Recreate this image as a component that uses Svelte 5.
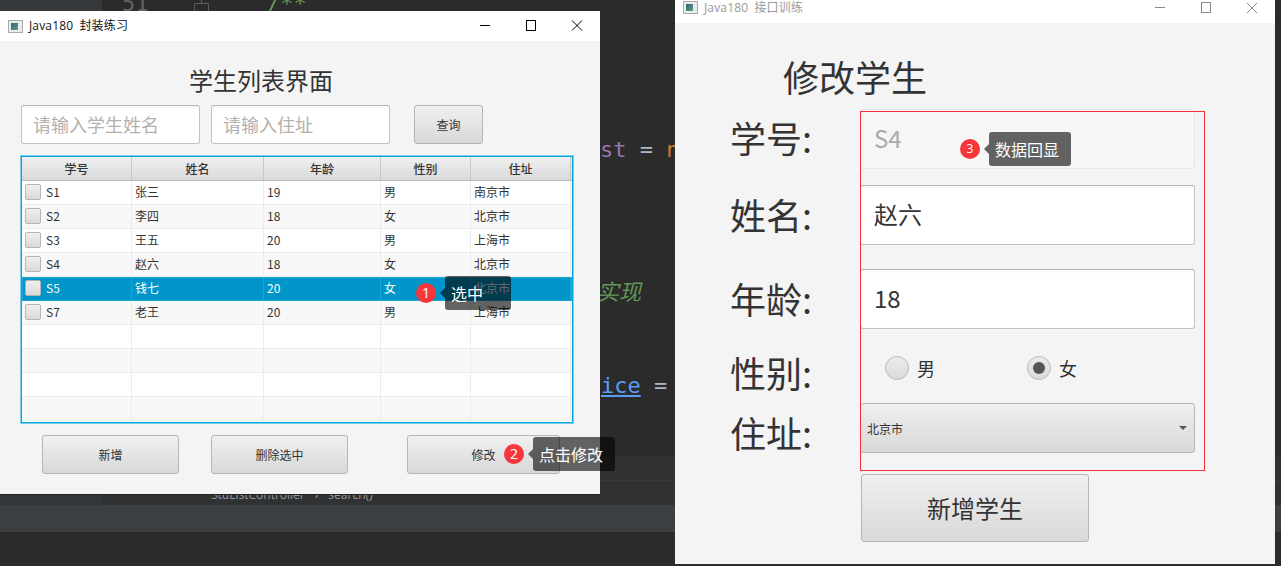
<script>
	const rows = [
		{ id: 'S1', name: '张三', age: '19', sex: '男', addr: '南京市' },
		{ id: 'S2', name: '李四', age: '18', sex: '女', addr: '北京市' },
		{ id: 'S3', name: '王五', age: '20', sex: '男', addr: '上海市' },
		{ id: 'S4', name: '赵六', age: '18', sex: '女', addr: '北京市' },
		{ id: 'S5', name: '钱七', age: '20', sex: '女', addr: '北京市', selected: true },
		{ id: 'S7', name: '老王', age: '20', sex: '男', addr: '上海市' },
		{}, {}, {}, {}
	];
	const headers = ['学号', '姓名', '年龄', '性别', '住址'];
	const fields = [
		{ label: '学号:', value: 'S4', cls: 'f-id', disabled: true },
		{ label: '姓名:', value: '赵六', cls: 'f-name' },
		{ label: '年龄:', value: '18', cls: 'f-age' }
	];
</script>

<div class="desktop">
	<!-- IDE behind the windows -->
	<div class="ide">
		<div class="ide-editor">
			<span class="code ln">51</span>
			<svg class="fold" width="15" height="12" viewBox="0 0 15 12"><path d="M7.5 0v3M.5 3.5h14v8M.5 3.5v8" stroke="#5a5d5f" fill="none"/></svg>
			<span class="code c1">/**</span>
			<span class="code c2">st <b>=</b> <em>n</em></span>
			<span class="code c3">实现</span>
			<span class="code c4"><u>ice</u> =</span>
		</div>
		<div class="ide-band"></div>
		<div class="ide-crumbs"><span class="crumb">StuListController</span><span class="crumb sep">›</span><span class="crumb">search()</span></div>
		<div class="ide-status"></div>
		<div class="ide-foot"></div>
	</div>

	<!-- list window -->
	<section class="win win-list">
		<header class="titlebar">
			<span class="app-icon"><i></i></span>
			<span class="win-title">Java180 封装练习</span>
			<span class="win-ctl">
				<svg width="46" height="30" viewBox="0 0 46 30"><path d="M18 14.5h10" stroke="#000" fill="none"/></svg>
				<svg width="46" height="30" viewBox="0 0 46 30"><rect x="18.5" y="9.5" width="9" height="10" stroke="#000" fill="none"/></svg>
				<svg width="46" height="30" viewBox="0 0 46 30"><path d="M18 9.5l10 10M28 9.5l-10 10" stroke="#000" fill="none"/></svg>
			</span>
		</header>
		<div class="list-body">
			<h1 class="list-title">学生列表界面</h1>
			<div class="search-row">
				<div class="input ph w179">请输入学生姓名</div>
				<div class="input ph w179">请输入住址</div>
				<button class="btn query">查询</button>
			</div>
			<div class="table">
				<div class="thead">
					{#each headers as h}<div class="th">{h}</div>{/each}
				</div>
				{#each rows as r, i}
					<div class="tr" class:odd={i % 2 === 1} class:sel={r.selected}>
						<div class="td first">
							{#if r.id}<span class="check"></span>{r.id}{/if}
						</div>
						<div class="td">{r.name ?? ''}</div>
						<div class="td">{r.age ?? ''}</div>
						<div class="td">{r.sex ?? ''}</div>
						<div class="td">{r.addr ?? ''}</div>
					</div>
				{/each}
			</div>
			<div class="action-row">
				<button class="btn add">新增</button>
				<button class="btn del">删除选中</button>
				<button class="btn edit">修改</button>
			</div>
		</div>
		<div class="mark m1"><span class="dot">1</span><span class="tip">选中</span></div>
		<div class="mark m2"><span class="dot">2</span><span class="tip">点击修改</span></div>
	</section>

	<!-- edit window -->
	<section class="win win-edit">
		<header class="titlebar thin">
			<span class="app-icon"><i></i></span>
			<span class="win-title dim">Java180 接口训练</span>
			<span class="win-ctl">
				<svg width="46" height="23" viewBox="0 0 46 23"><path d="M18 7.5h10" stroke="#888" fill="none"/></svg>
				<svg width="46" height="23" viewBox="0 0 46 23"><rect x="18.5" y="2.5" width="9" height="10" stroke="#888" fill="none"/></svg>
				<svg width="46" height="23" viewBox="0 0 46 23"><path d="M18 3l10 10M28 3l-10 10" stroke="#888" fill="none"/></svg>
			</span>
		</header>
		<div class="edit-body">
			<h1 class="edit-title">修改学生</h1>
			{#each fields as f}
				<div class="form-row {f.cls}">
					<label class="form-label">{f.label}</label>
					<div class="input big" class:disabled={f.disabled}>{f.value}</div>
				</div>
			{/each}
			<div class="form-row f-sex">
				<label class="form-label">性别:</label>
				<div class="radios">
					<span class="radio-item"><span class="radio"></span>男</span>
					<span class="radio-item"><span class="radio on"><i></i></span>女</span>
				</div>
			</div>
			<div class="form-row f-addr">
				<label class="form-label">住址:</label>
				<div class="combo"><span>北京市</span><i class="arrow"></i></div>
			</div>
			<button class="btn submit">新增学生</button>
		</div>
		<div class="redbox"></div>
		<div class="mark m3"><span class="dot">3</span><span class="tip">数据回显</span></div>
	</section>
</div>

<style>
	:global(body) {
		margin: 0;
		background: #2b2b2b;
		font-family: "Noto Sans CJK SC", "Open Sans", sans-serif;
	}

	.desktop {
		position: relative;
		width: 1281px;
		height: 566px;
		overflow: hidden;
		color: #333;
	}

	/* IDE */
	.ide {
		position: absolute;
		inset: 0;
		display: flex;
		flex-direction: column;
	}
	.ide-editor {
		position: relative;
		height: 456px;
		background: linear-gradient(to right, #36393b 102px, #2b2b2b 102px);
		flex: none;
	}
	.code {
		position: absolute;
		font-family: "DejaVu Sans Mono", monospace;
		font-size: 22px;
		line-height: 26px;
		white-space: pre;
	}
	.fold { position: absolute; left: 194px; top: 0; }
	.ln { left: 122px; top: -9px; color: #606366; }
	.c1 { left: 267px; top: -9px; color: #629755; }
	.c2 { left: 600px; top: 137px; color: #9876aa; }
	.c2 b { font-weight: 400; color: #a9b7c6; }
	.c2 em { font-style: normal; color: #cc7832; }
	.c3 { left: 597px; top: 277px; color: #629755; font-style: italic; font-family: "Noto Sans CJK SC", sans-serif; }
	.c4 { left: 601px; top: 373px; color: #a9b7c6; }
	.c4 u { color: #589df6; }
	.ide-band {
		height: 25px;
		background: #303132;
		border-bottom: 1px solid #38393a;
		box-sizing: border-box;
		flex: none;
	}
	.ide-crumbs {
		height: 24px;
		background: linear-gradient(to right, #33373a 102px, #303132 102px);
		display: flex;
		gap: 10px;
		padding-left: 211px;
		font-family: "Open Sans", sans-serif;
		font-size: 12px;
		color: #999;
		flex: none;
	}
	.crumb { margin-top: 5px; }
	.ide-status { height: 27px; background: #3c3f41; flex: none; }
	.ide-foot { flex: 1; background: #2b2b2b; }

	/* windows */
	.win {
		position: absolute;
		background: #f4f4f4;
		display: flex;
		flex-direction: column;
	}
	.win-list { left: 0; top: 11px; width: 600px; height: 483px; box-shadow: 0 1px 0 #222; }
	.win-edit { left: 675px; top: -7px; width: 600px; height: 571px; }

	.titlebar {
		height: 30px;
		background: #fff;
		display: flex;
		align-items: center;
		padding-left: 8px;
		flex: none;
	}
	.titlebar.thin { align-items: flex-end; }
	.titlebar.thin .app-icon { margin-bottom: 9px; }
	.titlebar.thin .win-title { margin-bottom: 7px; }
	.app-icon {
		width: 15px;
		height: 13px;
		background: #e8ecec;
		border: 1px solid #aaa;
		box-sizing: border-box;
		padding: 2px;
		margin-right: 6px;
		display: block;
	}
	.app-icon i {
		display: block;
		width: 7px;
		height: 7px;
		background: linear-gradient(135deg, #35627c, #5e9e84);
	}
	.win-title {
		font-family: "Open Sans", "Noto Sans CJK SC", sans-serif;
		font-size: 12px;
		letter-spacing: 0.15px;
		word-spacing: 3px;
		color: #111;
		line-height: 16px;
	}
	.win-title.dim { color: #999; }
	.win-ctl {
		margin-left: auto;
		display: flex;
	}
	.win-ctl svg { display: block; }

	/* list window */
	.list-body {
		display: flex;
		flex-direction: column;
		padding-left: 21px;
	}
	.list-title {
		margin: 23px 0 0;
		width: 480px;
		text-align: center;
		font-size: 24px;
		font-weight: 400;
		line-height: 32px;
		height: 41px;
	}
	.search-row {
		display: flex;
		align-items: stretch;
		height: 39px;
	}
	.input {
		box-sizing: border-box;
		background: linear-gradient(#f6f6f6, #fff 4px);
		border: 1px solid #c2c2c2;
		border-top-color: #b4b4b4;
		border-radius: 3px;
	}
	.ph {
		font-size: 18px;
		color: #b4b0ae;
		padding-left: 11px;
		line-height: 36px;
	}
	.w179 { width: 179px; margin-right: 11px; }
	.btn {
		box-sizing: border-box;
		font-family: inherit;
		color: #333;
		font-size: 12px;
		background: linear-gradient(#f0f0f0, #d8d8d8);
		border: 1px solid #b5b5b5;
		border-radius: 3px;
		padding: 0;
	}
	.query { width: 69px; margin-left: 13px; }

	.table {
		margin-top: 12px;
		width: 552px;
		height: 267px;
		box-sizing: border-box;
		border: 1px solid #03a6e0;
		box-shadow: 0 0 0 1px rgba(3, 166, 224, 0.5);
		background: #fff;
		overflow: hidden;
		font-size: 12px;
	}
	.thead, .tr {
		display: grid;
		grid-template-columns: 110px 132px 117px 90px 100px;
	}
	.thead {
		height: 24px;
		box-sizing: border-box;
		background: linear-gradient(#f0f0f0, #d9d9d9);
		border-bottom: 1px solid #bcbcbc;
	}
	.th {
		text-align: center;
		line-height: 23px;
		font-weight: 500;
		border-right: 1px solid #c8c8c8;
		box-sizing: border-box;
		color: #333;
	}
	.tr { height: 24px; background: #fff; }
	.tr.odd { background: #f8f8f8; }
	.td {
		box-sizing: border-box;
		border-right: 1px solid #ececec;
		border-bottom: 1px solid #ececec;
		padding: 0 0 1px 3px;
		line-height: 22px;
		display: flex;
		align-items: center;
		color: #333;
		font-size: 12px;
	}
	.check {
		width: 16px;
		height: 16px;
		box-sizing: border-box;
		border: 1px solid #b5b5b5;
		border-radius: 2px;
		background: linear-gradient(#efefef, #d9d9d9);
		margin-right: 5px;
	}
	.tr.sel {
		background: #0096c9;
		box-shadow: inset 0 0 0 1px #1ca6d4;
	}
	.tr.sel .td {
		color: #fff;
		border-right-color: #1ca6d4;
		border-bottom-color: #1ca6d4;
	}

	.action-row {
		display: flex;
		margin-top: 12px;
		height: 39px;
		padding-left: 21px;
	}
	.add { width: 137px; }
	.del { width: 137px; margin-left: 32px; }
	.edit { width: 153px; margin-left: 59px; }

	/* annotations */
	.mark {
		position: absolute;
		display: flex;
		align-items: center;
		gap: 9px;
	}
	.dot {
		width: 20px;
		height: 20px;
		border-radius: 50%;
		background: #f6363a;
		color: #fff;
		font-size: 14px;
		text-align: center;
		line-height: 20px;
		font-family: "Open Sans", sans-serif;
		flex: none;
	}
	.m3 .dot { font-size: 12px; }
	.tip {
		position: relative;
		background: rgba(0, 0, 0, 0.6);
		color: #fff;
		font-size: 16px;
		border-radius: 3px;
		padding: 0 12px 0 6px;
		box-sizing: border-box;
		min-width: 66px;
		height: 34px;
		line-height: 34px;
		white-space: nowrap;
	}
	.tip::before {
		content: "";
		position: absolute;
		left: -5px;
		top: 12px;
		border-top: 5px solid transparent;
		border-bottom: 5px solid transparent;
		border-right: 5px solid rgba(0, 0, 0, 0.6);
	}
	.m1 { left: 416px; top: 265px; }
	.m2 { left: 504px; top: 426px; }
	.m3 { left: 285px; top: 139px; }

	/* edit window */
	.edit-body {
		display: flex;
		flex-direction: column;
		align-items: flex-start;
		padding-left: 55px;
	}
	.edit-title {
		margin: 27px 0 0 53px;
		font-size: 36px;
		font-weight: 400;
		line-height: 52px;
		height: 59px;
	}
	.form-row {
		display: flex;
		align-items: center;
	}
	.form-label {
		width: 130px;
		font-size: 36px;
		line-height: 50px;
		box-sizing: border-box;
	}
	.input.big {
		width: 335px;
		height: 60px;
		font-size: 24px;
		line-height: 56px;
		padding-left: 13px;
		color: #333;
		flex: none;
	}
	.input.big.disabled {
		color: #aaa;
		background: #f6f6f6;
		border-color: #e6e6e6;
	}
	.f-id { height: 60px; }
	.f-id .form-label { padding-bottom: 4px; }
	.f-name { margin-top: 16px; height: 60px; }
	.f-name .form-label { padding-bottom: 2px; }
	.f-age { margin-top: 24px; height: 60px; }
	.f-age .form-label { padding-bottom: 2px; }
	.f-sex { height: 48px; margin-top: 15px; }
	.f-sex .form-label { padding-top: 8px; }
	.f-addr { margin-top: 11px; height: 50px; }
	.f-addr .form-label { padding-top: 8px; }
	.radios { display: flex; margin-bottom: 1px; }
	.radio-item {
		display: flex;
		align-items: center;
		font-size: 18px;
		gap: 8px;
		width: 167px;
		padding-left: 25px;
		box-sizing: border-box;
	}
	.radio-item + .radio-item { padding-left: 0; }
	.radio {
		width: 24px;
		height: 24px;
		box-sizing: border-box;
		border-radius: 50%;
		border: 1px solid #bbb;
		background: linear-gradient(#ececec, #dadada);
		display: flex;
		align-items: center;
		justify-content: center;
	}
	.radio i {
		width: 12px;
		height: 12px;
		border-radius: 50%;
		background: #555;
	}
	.combo {
		box-sizing: border-box;
		width: 335px;
		height: 50px;
		border: 1px solid #b5b5b5;
		border-radius: 3px;
		background: linear-gradient(#efefef, #d9d9d9);
		display: flex;
		align-items: center;
		justify-content: space-between;
		padding: 0 7px 0 6px;
		font-size: 12px;
	}
	.arrow {
		border-left: 4px solid transparent;
		border-right: 4px solid transparent;
		border-top: 4px solid #555;
	}
	.submit {
		margin: 21px 0 0 131px;
		width: 228px;
		height: 68px;
		font-size: 24px;
		padding-bottom: 2px;
	}
	.redbox {
		position: absolute;
		left: 185px;
		top: 118px;
		width: 343px;
		height: 358px;
		border: 1px solid #f0333a;
		pointer-events: none;
	}
</style>
